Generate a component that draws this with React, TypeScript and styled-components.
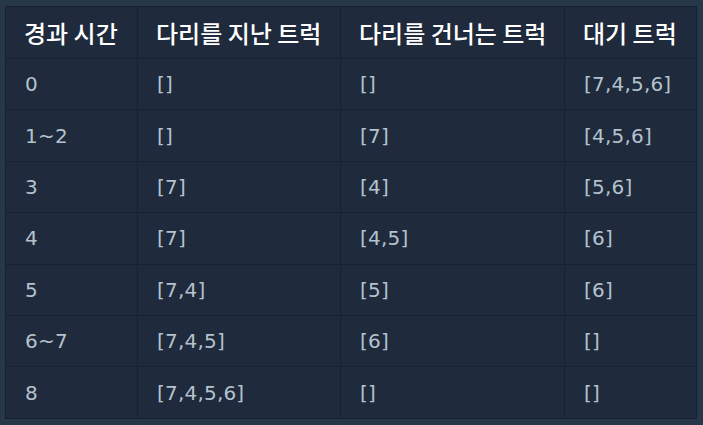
import React from 'react'
import styled, { createGlobalStyle } from 'styled-components'

const GlobalStyle = createGlobalStyle`
  html, body {
    margin: 0;
    padding: 0;
    background: #263747;
  }
  body {
    font-family: "Noto Sans CJK KR", "Noto Sans", sans-serif;
  }
`

const Wrap = styled.div`
  padding: 6px 7px 7px 5px;
  background: #263747;
`

const Table = styled.table`
  width: 691px;
  table-layout: fixed;
  border-collapse: collapse;
  background: #1f2a3c;
  border: 1px solid #172130;
`

const HeadCell = styled.th<{ $w: number }>`
  box-sizing: border-box;
  width: ${p => p.$w}px;
  height: 52px;
  padding: 0 18px;
  text-align: left;
  color: #ffffff;
  font-family: "Noto Sans CJK KR", sans-serif;
  font-size: 24px;
  font-weight: 500;
  border: 1px solid #172130;
  white-space: nowrap;
`

const Cell = styled.td`
  box-sizing: border-box;
  height: 51.4px;
  padding: 0 19px;
  color: #b4c2ce;
  font-family: "DejaVu Sans", "Noto Sans CJK KR", sans-serif;
  font-size: 20px;
  letter-spacing: 0.2px;
  font-weight: 400;
  border: 1px solid #172130;
  white-space: nowrap;
`

const columns = [
  { label: '경과 시간', w: 132 },
  { label: '다리를 지난 트럭', w: 203 },
  { label: '다리를 건너는 트럭', w: 224 },
  { label: '대기 트럭', w: 132 }
]

const rows = [
  ['0', '[]', '[]', '[7,4,5,6]'],
  ['1~2', '[]', '[7]', '[4,5,6]'],
  ['3', '[7]', '[4]', '[5,6]'],
  ['4', '[7]', '[4,5]', '[6]'],
  ['5', '[7,4]', '[5]', '[6]'],
  ['6~7', '[7,4,5]', '[6]', '[]'],
  ['8', '[7,4,5,6]', '[]', '[]']
]

function App() {
  return (
    <Wrap>
      <GlobalStyle />
      <Table>
        <thead>
          <tr>
            {columns.map(col => (
              <HeadCell key={col.label} $w={col.w}>
                {col.label}
              </HeadCell>
            ))}
          </tr>
        </thead>
        <tbody>
          {rows.map((row, i) => (
            <tr key={i}>
              {row.map((value, j) => (
                <Cell key={j}>{value}</Cell>
              ))}
            </tr>
          ))}
        </tbody>
      </Table>
    </Wrap>
  )
}

export default App
